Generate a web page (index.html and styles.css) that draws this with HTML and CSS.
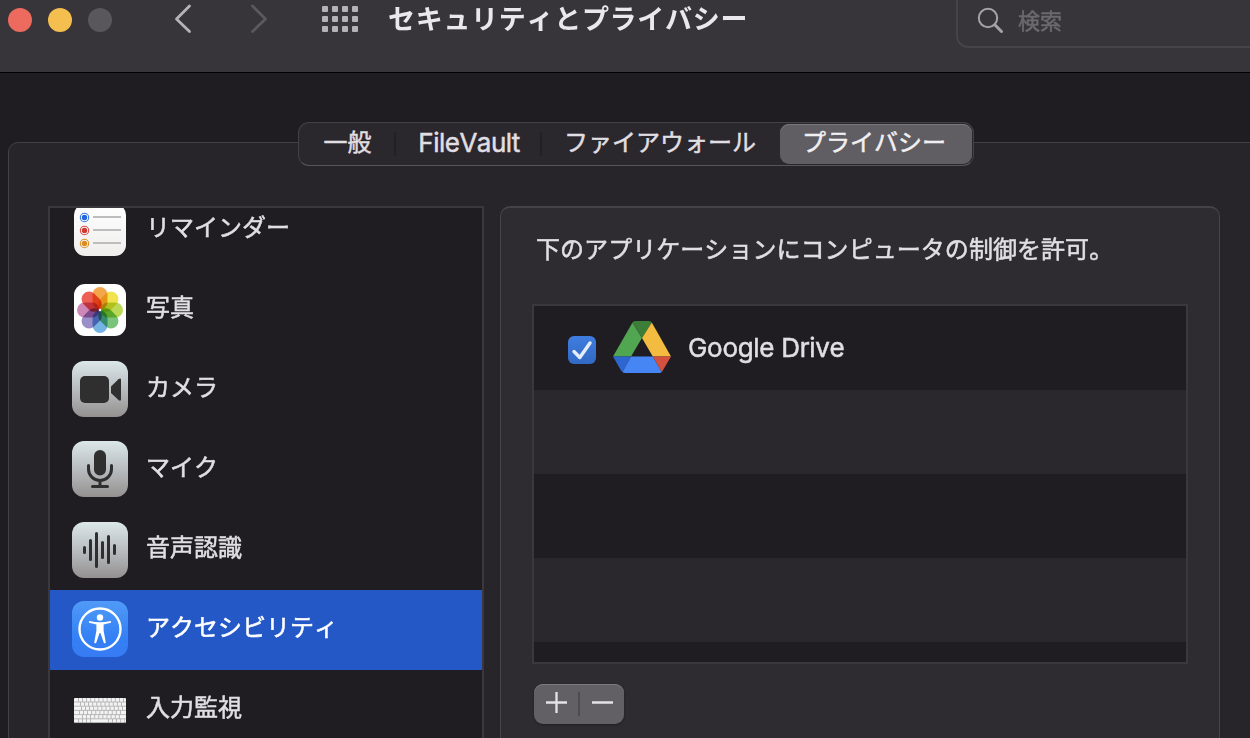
FILE: index.html
```html
<!DOCTYPE html>
<html lang="ja">
<head>
<meta charset="utf-8">
<title>セキュリティとプライバシー</title>
<link rel="stylesheet" href="styles.css">
</head>
<body>
<div class="window">
  <header class="toolbar">
    <div class="lights">
      <span class="light close"></span><span class="light minimize"></span><span class="light zoom"></span>
    </div>
    <svg class="nav" width="100" height="40" viewBox="0 0 100 40" fill="none" stroke-width="2.8" stroke-linecap="round" stroke-linejoin="round">
      <path d="M19.500 6L6.500 19L19.500 31.500" stroke="#b5b3b7"/>
      <path d="M82.500 6L95.500 19L82.500 31.500" stroke="#5b585e"/>
    </svg>
    <div class="grid-icon"><i></i><i></i><i></i><i></i><i></i><i></i><i></i><i></i><i></i><i></i><i></i><i></i></div>
    <h1 class="title">セキュリティとプライバシー</h1>
    <div class="search">
      <svg width="28" height="28" viewBox="0 0 28 28" fill="none" stroke="#a5a3a7"><circle cx="11" cy="11" r="9.200" stroke-width="2"/><path d="M17.800 17.800L24.500 24.500" stroke-width="3" stroke-linecap="round"/></svg>
      <span>検索</span>
    </div>
  </header>

  <nav class="tabs">
    <span class="tab general">一般</span>
    <span class="tab vault">FileVault</span>
    <span class="tab firewall">ファイアウォール</span>
    <span class="tab privacy">プライバシー</span>
  </nav>

  <main class="panel">
    <ul class="sidebar">
      <li class="item">
        <svg class="icon" viewBox="0 -2 56 56">
          <defs><linearGradient id="paper" x2="0" y2="1"><stop stop-color="#fff"/><stop offset="1" stop-color="#efeeed"/></linearGradient></defs>
          <rect x="2" y="0" width="52" height="52" rx="11" fill="url(#paper)"/>
          <g fill="none" stroke-width="1.100"><circle cx="12.500" cy="13.500" r="4.200" stroke="#3478e5"/><circle cx="12.500" cy="26.500" r="4.200" stroke="#d94a40"/><circle cx="12.500" cy="39.500" r="4.200" stroke="#db9129"/></g>
          <circle cx="12.500" cy="13.500" r="2.700" fill="#2465dc"/><circle cx="12.500" cy="26.500" r="2.700" fill="#cd3b34"/><circle cx="12.500" cy="39.500" r="2.700" fill="#db8c20"/>
          <path d="M21 13H49M21 26H49M21 39H49" stroke="#bdbdbe" stroke-width="1.800"/>
        </svg>
        <span>リマインダー</span>
      </li>
      <li class="item">
        <svg class="icon" viewBox="0 0 56 56">
          <rect x="2" y="2" width="52" height="52" rx="11" fill="#fff"/>
          <g class="petals">
            <rect x="20.500" y="5" width="15" height="22.500" rx="7.500" fill="#f29a31"/>
            <rect x="20.500" y="5" width="15" height="22.500" rx="7.500" fill="#f0df38" transform="rotate(45 28 28)"/>
            <rect x="20.500" y="5" width="15" height="22.500" rx="7.500" fill="#b2d43f" transform="rotate(90 28 28)"/>
            <rect x="20.500" y="5" width="15" height="22.500" rx="7.500" fill="#68bd69" transform="rotate(135 28 28)"/>
            <rect x="20.500" y="5" width="15" height="22.500" rx="7.500" fill="#62a9df" transform="rotate(180 28 28)"/>
            <rect x="20.500" y="5" width="15" height="22.500" rx="7.500" fill="#8d7fc1" transform="rotate(225 28 28)"/>
            <rect x="20.500" y="5" width="15" height="22.500" rx="7.500" fill="#c878ad" transform="rotate(270 28 28)"/>
            <rect x="20.500" y="5" width="15" height="22.500" rx="7.500" fill="#eb4a3d" transform="rotate(315 28 28)"/>
          </g>
          <circle cx="28" cy="28" r="1.200" fill="#fff"/>
        </svg>
        <span>写真</span>
      </li>
      <li class="item">
        <svg class="icon" viewBox="0 0 56 56">
          <defs><linearGradient id="silver" x2="0" y2="1"><stop stop-color="#dbe7ea"/><stop offset=".5" stop-color="#b9bdc0"/><stop offset="1" stop-color="#949190"/></linearGradient></defs>
          <rect y="-1" width="56" height="56" rx="12" fill="url(#silver)"/>
          <rect x="8" y="14" width="29" height="27" rx="5" fill="#2f2f30"/>
          <path d="M39 24.500L46.500 17.200Q49 15.500 49 18V37Q49 39.800 46.500 38L39 31Z" fill="#2f2f30"/>
        </svg>
        <span>カメラ</span>
      </li>
      <li class="item">
        <svg class="icon" viewBox="0 0 56 56">
          <rect y="-1" width="56" height="56" rx="12" fill="url(#silver)"/>
          <rect x="22" y="8" width="12" height="25.500" rx="6" fill="#2f2f30"/>
          <path d="M16.500 23.500V27a11.500 11.500 0 0 0 23 0V23.500M28 38.500V44M20.500 44.500H35.500" fill="none" stroke="#2f2f30" stroke-width="3" stroke-linecap="round"/>
        </svg>
        <span>マイク</span>
      </li>
      <li class="item">
        <svg class="icon" viewBox="0 0 56 56">
          <rect width="56" height="56" rx="12" fill="url(#silver)"/>
          <path d="M12.500 25.500V30.500M18.500 18.500V37.500M24.500 11.500V44.500M30.500 20.500V35.500M36.500 14.500V40.500M42.500 23.500V31.500" stroke="#2f2f30" stroke-width="3" stroke-linecap="round"/>
        </svg>
        <span>音声認識</span>
      </li>
      <li class="item selected">
        <svg class="icon" viewBox="0 0 56 56">
          <defs><linearGradient id="sky" x2="0" y2="1"><stop stop-color="#509bf7"/><stop offset=".65" stop-color="#3480f5"/><stop offset="1" stop-color="#377bf3"/></linearGradient></defs>
          <rect y="-1" width="56" height="56" rx="12" fill="url(#sky)"/>
          <circle cx="28" cy="27" r="20.500" fill="none" stroke="#fff" stroke-width="2.400"/>
          <circle cx="28" cy="15.500" r="3.200" fill="#fff"/>
          <path d="M17.500 18.900Q28 21.700 38.500 18.900Q39.800 19.500 38.800 20.800L31.600 22.500V28.500L33.800 40.500Q33.200 42 31.800 40.800L28.400 31H27.600L24.200 40.800Q22.800 42 22.200 40.500L24.400 28.500V22.500L17.200 20.800Q16.200 19.500 17.500 18.900Z" fill="#fff"/>
        </svg>
        <span>アクセシビリティ</span>
      </li>
      <li class="item">
        <svg class="icon" viewBox="0 0 56 56">
          <rect x="2" y="16" width="52" height="25" rx="1" fill="#f3f3f3"/>
          <path d="M2 20H54M2 24.200H54M2 28.400H54M2 32.600H54M2 36.800H54" stroke="#aaa" stroke-width=".8"/>
          <g stroke="#aaa" stroke-width="4" stroke-dasharray=".8 3.300" fill="none">
            <path d="M6 18H52"/><path d="M8 22H52"/><path d="M9 26.300H52"/><path d="M7 30.500H52"/><path d="M10 34.700H50"/><path d="M6 39H20M36 39H53"/>
          </g>
          <path d="M2 40.600H54" stroke="#999" stroke-width=".8"/>
        </svg>
        <span>入力監視</span>
      </li>
    </ul>

    <section class="detail">
      <p class="message">下のアプリケーションにコンピュータの制御を許可。</p>
      <div class="apps">
        <div class="app">
          <span class="check"><svg width="28" height="28" viewBox="0 0 28 28"><path d="M6 15.500L11.800 21.500L22 7" fill="none" stroke="#e5ecfa" stroke-width="3.400" stroke-linecap="round" stroke-linejoin="round"/></svg></span>
          <svg class="drive" width="58" height="52" viewBox="0 0 58 52">
            <path d="M19.500 1.500L29 17L18 35.500H0Z" fill="#51a651"/>
            <path d="M19.500 1.500Q20.500 0 22 0H36Q38 0 38.800 1.500L29 17Z" fill="#3c7d38"/>
            <path d="M38.800 1.500L58 35.500H39.800L29 17Z" fill="#f4bb41"/>
            <path d="M0 35.500H18L9.500 51L8 49.500Z" fill="#2e66cf"/>
            <path d="M18 35.500H39.800L48.800 51Q48 52 46.500 52H12Q10.500 52 9.500 51Z" fill="#4586f4"/>
            <path d="M39.800 35.500H58L49.500 50L48.800 51Z" fill="#d5513f"/>
          </svg>
          <span class="app-name">Google Drive</span>
        </div>
        <div class="app"></div><div class="app"></div><div class="app"></div><div class="app"></div>
      </div>
      <div class="edit">
        <svg width="90" height="40" viewBox="0 0 90 40" fill="none"><path d="M12 18.500H33M22.500 8V29M58 18.500H79" stroke="#e5e2e6" stroke-width="2.300"/><path d="M45 8V32" stroke="#4e4b51" stroke-width="2"/></svg>
      </div>
    </section>
  </main>
</div>
</body>
</html>
```
FILE: styles.css
```css
* { box-sizing: border-box; }
body {
  margin: 0;
  background: #1f1c22;
  color: #e0dfe1;
  font: 24px/36px "Inter", "Noto Sans CJK JP", sans-serif;
  font-kerning: none;
}
svg { overflow: visible; flex: none; }
.window { width: 1250px; height: 738px; overflow: hidden; display: flex; flex-direction: column; }
.toolbar {
  flex: none;
  height: 73px;
  display: flex;
  align-items: flex-start;
  padding-left: 8px;
  background: #37343a;
  border-bottom: 1px solid #000;
}
.lights { flex: none; display: flex; gap: 16px; padding-top: 8px; }
.light { width: 24px; height: 24px; border-radius: 50%; }
.close { background: #ec6a5e; }
.minimize { background: #f4bf4f; }
.zoom { background: #59565c; }
.nav { margin-left: 58px; }
.grid-icon { flex: none; display: grid; grid-template-columns: repeat(4, 6px); gap: 4px; width: 36px; margin: 6px 0 0 52px; }
.grid-icon i { height: 6px; background: #b5b3b7; border-radius: 1px; }
.title { flex: none; margin: 0 0 0 30px; width: 568px; font-size: 27px; line-height: 39px; font-weight: 700; letter-spacing: .7px; color: #e9e8ea; }
.search {
  flex: none;
  display: flex;
  width: 320px;
  height: 60px;
  margin-top: -12px;
  padding: 17px 0 0 19px;
  gap: 13px;
  border: 2px solid #464349;
  border-radius: 12px;
  font-size: 22px;
  line-height: 28px;
  color: #6b696e;
  -webkit-text-stroke: .5px;
}
.tabs {
  flex: none;
  display: flex;
  z-index: 1;
  width: 676px;
  height: 44px;
  margin: 49px 0 0 298px;
  border: 1px solid #434046;
  border-bottom-color: #57545a;
  border-radius: 11px;
  background: #2a272d;
}
.tab { position: relative; line-height: 40px; text-align: center; white-space: nowrap; -webkit-text-stroke: .5px; }
.general { width: 97px; }
.vault { width: 146px; font-size: 26px; letter-spacing: -.5px; }
.firewall { width: 238px; padding-right: 2px; }
.privacy { width: 192px; margin-top: 1px; height: 40px; line-height: 38px; border-radius: 9px; background: #605d63; box-shadow: inset 0 1px #79767c; color: #f0eff1; padding-right: 4px; }
.general::after, .vault::after { content: ""; position: absolute; right: 0; top: 9px; width: 2px; height: 24px; background: #222025; }
.panel {
  flex: none;
  display: flex;
  gap: 16px;
  width: 1260px;
  height: 620px;
  margin: -24px 0 0 8px;
  padding: 63px 0 0 39px;
  border: 1px solid #434046;
  border-radius: 10px;
  background: #27242a;
}
.sidebar {
  width: 436px;
  height: 560px;
  margin: 0;
  padding: 0;
  list-style: none;
  overflow: hidden;
  border: 2px solid #3a383b;
  background: #1f1c22;
}
.item { display: flex; align-items: center; height: 80px; padding-left: 22px; gap: 18px; }
.item:first-child { margin-top: -18px; }
.item span { padding-bottom: 4px; -webkit-text-stroke: .5px; }
.icon { width: 56px; height: 56px; }
.selected { background: #2458c7; color: #fff; }
.petals rect { mix-blend-mode: multiply; opacity: .88; }
.detail { width: 720px; height: 560px; padding: 0 31px; border: 1px solid #454248; border-width: 2px 1px; border-radius: 10px; background: #2e2b31; }
.message { margin: 24px 0 36px 4px; white-space: nowrap; letter-spacing: .05px; -webkit-text-stroke: .5px; }
.apps { width: 656px; height: 360px; overflow: hidden; border: 2px solid #3a383b; }
.app { display: flex; align-items: center; height: 84px; padding-left: 34px; background: #1f1c22; }
.app:nth-child(even) { background: #2a272d; }
.check { width: 28px; height: 28px; margin-top: 4px; border-radius: 6px; background: linear-gradient(#3f7de0, #3269c3); }
.drive { margin: -2px 0 0 17px; }
.app-name { margin-left: 17px; font-size: 26px; letter-spacing: -.3px; -webkit-text-stroke: .5px; }
.edit { width: 90px; height: 40px; margin: 20px 0 0 2px; border-radius: 9px; background: #625f65; box-shadow: inset 0 1px #7c797f, 0 1px 2px #201d23; }
```
